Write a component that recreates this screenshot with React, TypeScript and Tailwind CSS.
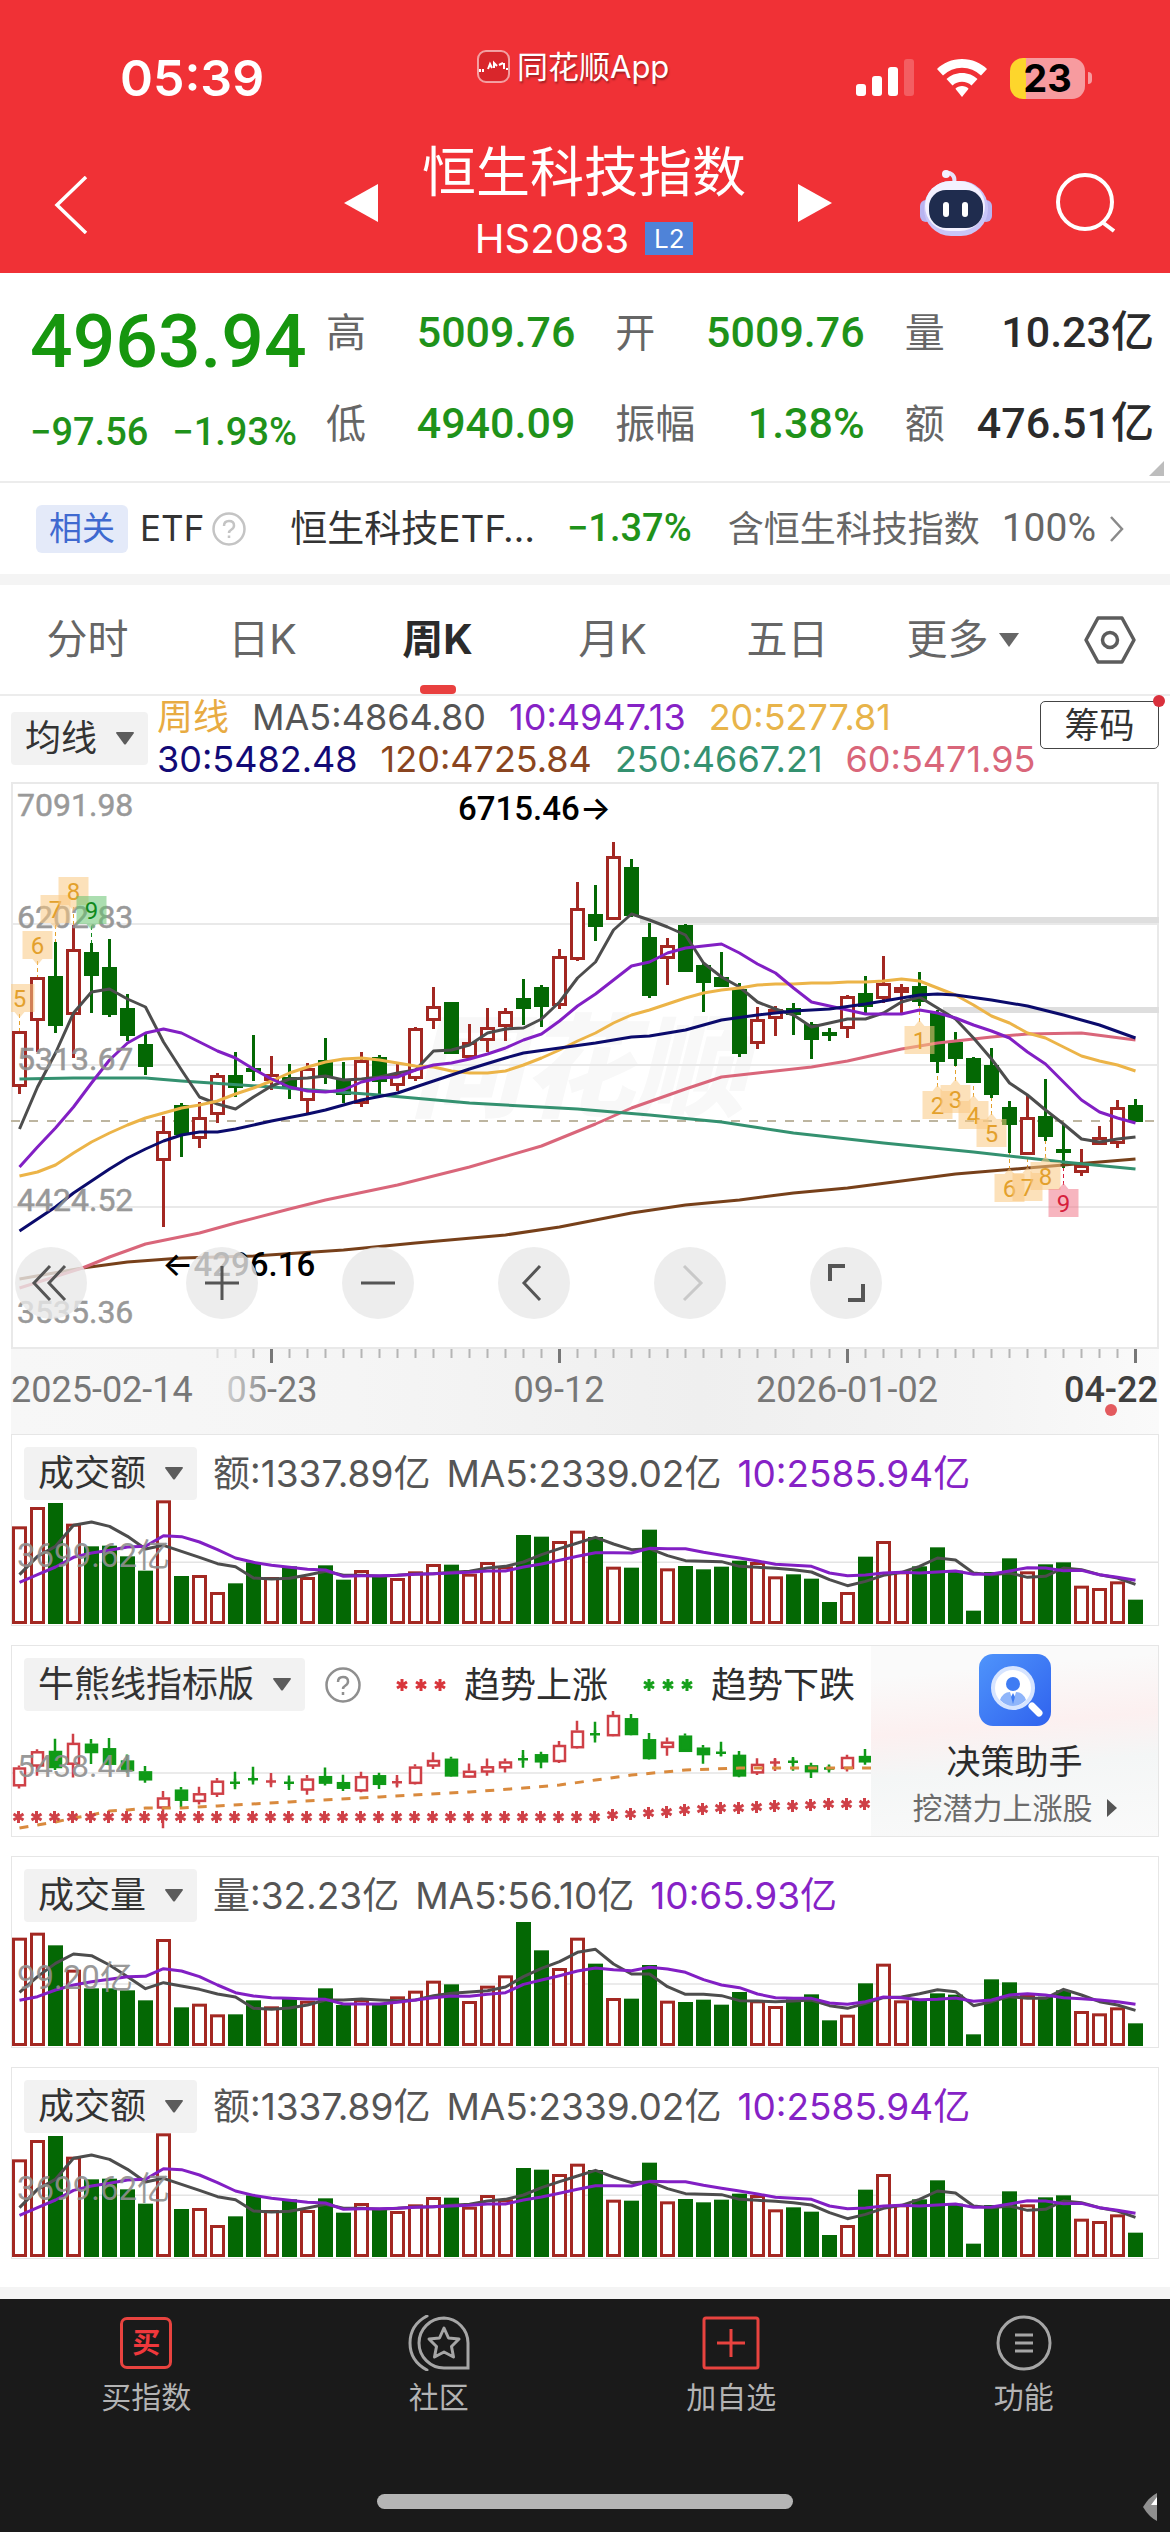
import { useState } from 'react';
import type { ReactNode } from 'react';

const RED = '#a32822';
const GREEN = '#046804';

// [kind, body top, body bottom, high, low]
type Candle = ['r' | 'g', number, number, number, number];

const candles: Candle[] = [
  ['r', 1031, 1087, 1031, 1094], ['r', 977, 1021, 977, 1052], ['g', 976, 1026, 942, 1033],
  ['r', 949, 1015, 925, 1058], ['g', 952, 976, 943, 1013], ['g', 967, 1015, 939, 1017],
  ['g', 1008, 1036, 994, 1041], ['g', 1044, 1067, 1033, 1075], ['r', 1131, 1161, 1116, 1227],
  ['g', 1105, 1135, 1103, 1157], ['r', 1117, 1139, 1102, 1148], ['r', 1075, 1115, 1073, 1123],
  ['g', 1075, 1088, 1052, 1097], ['g', 1068, 1072, 1035, 1081], ['r', 1074, 1081, 1056, 1090],
  ['g', 1077, 1087, 1064, 1099], ['r', 1068, 1101, 1063, 1115], ['g', 1060, 1078, 1038, 1084],
  ['g', 1080, 1095, 1062, 1103], ['r', 1060, 1104, 1052, 1107], ['g', 1057, 1082, 1055, 1096],
  ['r', 1074, 1086, 1063, 1091], ['r', 1028, 1079, 1027, 1081], ['r', 1006, 1021, 987, 1029],
  ['g', 1002, 1054, 1002, 1054], ['r', 1042, 1058, 1024, 1058], ['r', 1027, 1041, 1008, 1052],
  ['r', 1011, 1027, 1008, 1041], ['g', 998, 1009, 979, 1025], ['g', 987, 1007, 985, 1027],
  ['r', 956, 1006, 949, 1009], ['r', 908, 960, 882, 961], ['g', 914, 927, 885, 941],
  ['r', 856, 920, 842, 920], ['g', 867, 916, 859, 917], ['g', 937, 996, 923, 998],
  ['r', 945, 959, 938, 985], ['g', 925, 972, 924, 972], ['g', 965, 983, 963, 1012],
  ['g', 977, 987, 952, 987], ['g', 989, 1054, 983, 1057], ['r', 1019, 1044, 1007, 1049],
  ['r', 1009, 1019, 1006, 1036], ['g', 1008, 1015, 1003, 1035], ['g', 1024, 1040, 1022, 1059],
  ['g', 1032, 1036, 1028, 1041], ['r', 996, 1029, 995, 1038], ['g', 993, 1007, 976, 1015],
  ['r', 983, 999, 956, 1003], ['r', 987, 993, 984, 1013], ['g', 986, 1002, 972, 1006],
  ['g', 1013, 1062, 1010, 1073], ['g', 1042, 1059, 1032, 1066], ['g', 1058, 1083, 1057, 1083],
  ['g', 1065, 1095, 1048, 1098], ['g', 1107, 1125, 1101, 1153], ['r', 1117, 1155, 1095, 1155],
  ['g', 1116, 1137, 1079, 1141], ['g', 1149, 1152, 1124, 1168], ['r', 1165, 1173, 1149, 1176],
  ['r', 1137, 1145, 1126, 1145], ['r', 1107, 1144, 1100, 1148], ['g', 1105, 1122, 1099, 1122],
];

const ma5 = [
  1129, 1087, 1053, 1013, 992, 989, 999, 1007, 1042, 1070, 1097, 1104, 1109, 1097, 1086, 1079,
  1078, 1076, 1080, 1079, 1077, 1073, 1070, 1051, 1050, 1045, 1033, 1029, 1028, 1019, 1002, 978,
  962, 930, 914, 920, 927, 935, 963, 977, 987, 1002, 1009, 1015, 1027, 1023, 1019, 1019,
  1013, 1002, 997, 1008, 1019, 1038, 1059, 1083, 1095, 1110, 1124, 1139, 1142, 1139, 1137,
];
const ma10 = [
  1167, 1147, 1128, 1107, 1083, 1060, 1043, 1033, 1029, 1033, 1042, 1051, 1058, 1069, 1079, 1087,
  1091, 1092, 1090, 1082, 1078, 1077, 1070, 1065, 1063, 1059, 1054, 1048, 1040, 1034, 1021, 1006,
  994, 980, 966, 962, 953, 948, 946, 944, 953, 964, 973, 988, 1002, 1006, 1010, 1014,
  1014, 1014, 1010, 1013, 1018, 1025, 1031, 1038, 1052, 1064, 1082, 1100, 1112, 1118, 1123,
];
const ma20 = [
  1176, 1172, 1165, 1153, 1142, 1133, 1125, 1118, 1113, 1108, 1105, 1101, 1094, 1088, 1081, 1073,
  1067, 1062, 1059, 1058, 1060, 1063, 1066, 1067, 1071, 1073, 1073, 1071, 1065, 1058, 1050, 1041,
  1033, 1023, 1015, 1010, 1004, 998, 993, 990, 988, 985, 984, 984, 983, 983, 982, 982,
  981, 979, 981, 988, 995, 1005, 1016, 1023, 1033, 1038, 1047, 1056, 1061, 1065, 1071,
];

// [week index, y]
type Points = number[][];

const ma30: Points = [
  [0, 1231], [2, 1207], [3, 1193], [4, 1181], [5, 1169], [6, 1158], [7, 1149], [8, 1141], [9, 1135],
  [10, 1132], [11, 1132], [12, 1129], [14, 1121], [16, 1114], [17, 1110], [19, 1100], [21, 1093],
  [23, 1081], [25, 1069], [27, 1058], [28, 1053], [30, 1048], [32, 1043], [34, 1037], [35, 1036],
  [37, 1030], [39, 1020], [41, 1015], [43, 1011], [45, 1009], [47, 1004], [49, 998], [50, 995],
  [51, 994], [52, 995], [54, 1000], [56, 1006], [58, 1015], [60, 1025], [62, 1038],
];
const ma60: Points = [
  [0, 1288], [3.5, 1268], [5, 1257], [7, 1244], [10, 1233], [12, 1223], [15, 1209], [17, 1200],
  [21, 1185], [25, 1167], [29, 1146], [32, 1124], [34, 1108], [37, 1089], [39, 1077], [41, 1073],
  [44, 1067], [46, 1061], [49, 1049], [51, 1043], [54, 1037], [56, 1034], [59, 1033], [62, 1040],
];
const ma120: Points = [
  [0, 1279], [3.5, 1268], [6, 1262], [9, 1258], [13, 1256], [18, 1250], [22, 1243], [27, 1235],
  [30, 1227], [32, 1220], [34, 1213], [37, 1205], [40, 1200], [43, 1193], [46, 1188], [49, 1181],
  [52, 1174], [56, 1168], [58, 1165], [62, 1159],
];
const ma250: Points = [
  [0, 1079], [3, 1078], [7, 1078], [9, 1081], [14, 1087], [20, 1095], [25, 1103], [31, 1109],
  [35, 1115], [39, 1122], [43, 1133], [48, 1143], [53, 1152], [58, 1162], [62, 1169],
];

interface VolumeSeries {
  base: number;
  grid: number;
  bars: number[];
  ma5: number[];
  ma10: number[];
}

const amount: VolumeSeries = {
  base: 583,
  grid: 398,
  bars: [
    290, 232, 220, 282, 350, 348, 380, 423, 212, 439, 436, 487, 461, 398, 442, 410, 442, 407, 450, 421, 437,
    445, 425, 403, 405, 432, 397, 410, 316, 321, 334, 303, 322, 411, 414, 300, 416, 409, 419, 411, 393, 397,
    440, 434, 447, 517, 487, 381, 334, 425, 410, 353, 423, 543, 427, 386, 425, 404, 398, 468, 475, 455, 510,
  ],
  ma5: [
    435, 380, 350, 287, 277, 290, 320, 358, 347, 365, 383, 402, 411, 445, 448, 446, 436, 425, 437, 437, 440,
    437, 433, 432, 428, 425, 415, 410, 397, 375, 357, 340, 323, 343, 360, 357, 378, 393, 395, 396, 410, 413,
    416, 420, 427, 450, 468, 455, 437, 428, 410, 385, 391, 430, 435, 430, 443, 440, 415, 420, 435, 445, 464,
  ],
  ma10: [
    458, 435, 412, 383, 370, 362, 352, 350, 318, 321, 337, 360, 385, 398, 407, 413, 419, 421, 440, 438, 438,
    437, 434, 432, 430, 428, 424, 424, 412, 403, 392, 380, 369, 369, 370, 356, 357, 357, 368, 377, 385, 394,
    404, 407, 410, 430, 438, 436, 430, 428, 430, 427, 424, 434, 433, 424, 414, 415, 423, 422, 435, 443, 452,
  ],
};

const volume: VolumeSeries = {
  base: 623,
  grid: 437,
  bars: [
    298, 283, 321, 394, 450, 450, 456, 486, 302, 507, 496, 528, 528, 486, 504, 480, 487, 450, 500, 483, 498,
    474, 457, 427, 438, 488, 442, 411, 250, 336, 389, 298, 376, 479, 481, 380, 487, 491, 484, 499, 461, 486,
    503, 483, 468, 546, 529, 435, 376, 486, 485, 465, 469, 588, 423, 432, 470, 475, 456, 518, 525, 507, 555,
  ],
  ma5: [
    462, 415, 375, 347, 352, 380, 415, 451, 433, 443, 453, 467, 476, 510, 513, 509, 500, 485, 485, 482, 485,
    487, 485, 472, 465, 461, 457, 446, 415, 390, 370, 342, 333, 377, 407, 407, 445, 468, 468, 472, 487, 488,
    490, 488, 485, 502, 510, 495, 478, 476, 466, 454, 460, 502, 490, 475, 480, 480, 453, 470, 490, 500, 516,
  ],
  ma10: [
    486, 475, 455, 440, 430, 423, 415, 414, 391, 398, 415, 440, 463, 473, 478, 480, 482, 483, 497, 497, 497,
    492, 485, 478, 473, 474, 468, 463, 438, 425, 412, 398, 389, 394, 397, 387, 392, 402, 424, 440, 448, 467,
    478, 480, 480, 494, 498, 490, 476, 478, 484, 483, 479, 489, 485, 470, 466, 470, 478, 481, 485, 490, 498,
  ],
};

const weekX = (i: number) => 19.5 + i * 18;
const dense = (ys: number[]) => ys.map((y, i) => `${weekX(i)},${y}`).join(' ');
const sparse = (ps: Points) => ps.map(([i, y]) => `${weekX(i)},${y}`).join(' ');

const Line = ({ points, color }: { points: string; color: string }) => (
  <polyline points={points} fill="none" stroke={color} strokeWidth="3" strokeLinejoin="round" />
);

// Nine-turn counters drawn above or below a candle
const badges = [
  { i: 0, y: 984, n: 5, up: true, tone: 'amber' },
  { i: 1, y: 931, n: 6, up: true, tone: 'amber' },
  { i: 2, y: 895, n: 7, up: true, tone: 'amber' },
  { i: 3, y: 877, n: 8, up: true, tone: 'amber' },
  { i: 4, y: 896, n: 9, up: true, tone: 'green' },
  { i: 50, y: 1026, n: 1, up: false, tone: 'amber' },
  { i: 51, y: 1091, n: 2, up: false, tone: 'amber' },
  { i: 52, y: 1085, n: 3, up: false, tone: 'amber' },
  { i: 53, y: 1101, n: 4, up: false, tone: 'amber' },
  { i: 54, y: 1119, n: 5, up: false, tone: 'amber' },
  { i: 55, y: 1174, n: 6, up: false, tone: 'amber' },
  { i: 56, y: 1173, n: 7, up: false, tone: 'amber' },
  { i: 57, y: 1162, n: 8, up: false, tone: 'amber' },
  { i: 58, y: 1189, n: 9, up: false, tone: 'red' },
];

const tones: Record<string, { fill: string; text: string }> = {
  amber: { fill: '#f9c881', text: '#e3a02c' },
  green: { fill: '#66c270', text: '#0f8a1c' },
  red: { fill: '#f0788a', text: '#d6203c' },
};

const KLineChart = () => (
  <svg
    viewBox="11 782 1148 652"
    className="block w-full font-['Roboto','Inter','Noto_Sans_CJK_SC',sans-serif]"
    role="img"
    aria-label="周K线"
  >
    <defs>
      <linearGradient id="strip" x1="0" x2="1" y1="0" y2="0">
        <stop offset="0" stopColor="#f7f7f7" />
        <stop offset="0.3" stopColor="#f5f5f5" />
        <stop offset="0.6" stopColor="#efefef" />
        <stop offset="0.85" stopColor="#f4f4f4" />
        <stop offset="1" stopColor="#fafafa" />
      </linearGradient>
      <linearGradient id="fadeDate" x1="0" x2="1" y1="0" y2="0">
        <stop offset="0" stopColor="#cfcfcf" />
        <stop offset="0.35" stopColor="#9a9a9a" />
        <stop offset="0.5" stopColor="#777" />
      </linearGradient>
    </defs>
    <text x="410" y="1108" fontSize="112" fontWeight="900" fontStyle="italic" fill="#f8f8f8">
      同花顺
    </text>
    <g stroke="#e9e9e9" strokeWidth="2">
      <path d="M11 924H1159M11 1065H1159M11 1207H1159" />
      <path d="M12 783H1158V1348H12Z" fill="none" />
    </g>
    <path d="M640 920H1159M943 1010H1159" stroke="#dedede" strokeWidth="6" />
    <path d="M11 1121H1159" stroke="#bdb5a0" strokeWidth="2" strokeDasharray="9 9" />

    <g strokeWidth="1" strokeDasharray="4 3">
      {badges.map((b) => (
        <path
          key={b.n + '-' + b.i}
          d={b.up ? `M${weekX(b.i)} ${b.y + 30}v18` : `M${weekX(b.i)} ${b.y - 4}v-18`}
          stroke={tones[b.tone].text}
        />
      ))}
    </g>
    {candles.map(([kind, top, bottom, high, low], i) => (
      <g key={i} stroke={kind === 'r' ? RED : GREEN} strokeWidth="3" fill={kind === 'r' ? '#fff' : GREEN}>
        <path d={`M${weekX(i)} ${high}V${top}M${weekX(i)} ${bottom}V${low}`} />
        <rect x={weekX(i) - 6} y={top + 1.5} width="12" height={Math.max(bottom - top - 3, 1)} />
      </g>
    ))}

    <Line points={sparse(ma120)} color="#77401a" />
    <Line points={sparse(ma60)} color="#d9667a" />
    <Line points={sparse(ma250)} color="#349170" />
    <Line points={dense(ma5)} color="#4d4d4d" />
    <Line points={dense(ma20)} color="#ecb448" />
    <Line points={dense(ma10)} color="#821fc4" />
    <Line points={sparse(ma30)} color="#0b0b6c" />

    <g fontSize="32" fill="#8f8f8f" opacity="0.9" strokeWidth="0.5" stroke="#8f8f8f">
      <text x="17" y="816">7091.98</text>
      <text x="17" y="928">6202.83</text>
      <text x="17" y="1070">5313.67</text>
      <text x="17" y="1211">4424.52</text>
      <text x="17" y="1323">3535.36</text>
    </g>
    <g fontSize="33" fontWeight="500" fill="#000">
      <text x="458" y="820">6715.46→</text>
      <text x="162" y="1276">←4296.16</text>
    </g>

    {badges.map((b) => (
      <g key={b.n + '-' + b.i}>
        <path
          d={
            b.up
              ? `M${Math.max(weekX(b.i) - 15, 11)} ${b.y}H${weekX(b.i) + 15}V${b.y + 28}H${weekX(b.i) + 5}l-5 6l-5 -6H${Math.max(weekX(b.i) - 15, 11)}Z`
              : `M${weekX(b.i) - 15} ${b.y}h10l5 -6l5 6h10v28h-30Z`
          }
          fill={tones[b.tone].fill}
          opacity="0.55"
        />
        <text x={weekX(b.i)} y={b.y + 23} fontSize="24" textAnchor="middle" fill={tones[b.tone].text}>
          {b.n}
        </text>
      </g>
    ))}

    {/* Time axis */}
    <rect x="11" y="1349" width="1148" height="85" fill="url(#strip)" />
    {Array.from({ length: 52 }, (_, k) => k + 11).map((i) => {
      const major = (i - 14) % 16 === 0;
      return (
        <path
          key={i}
          d={`M${weekX(i)} 1349v${major ? 14 : 9}`}
          stroke={major ? '#777' : '#b5b5b5'}
          strokeWidth={major ? 3 : 2}
          opacity={i < 13 ? 0.4 : 1}
        />
      );
    })}
    <g fontSize="36" fill="#777">
      <text x="11" y="1402">2025-02-14</text>
      <text x="272" y="1402" textAnchor="middle" fill="url(#fadeDate)">05-23</text>
      <text x="559" y="1402" textAnchor="middle">09-12</text>
      <text x="847" y="1402" textAnchor="middle">2026-01-02</text>
      <text x="1158" y="1402" textAnchor="end" fill="#3f3f3f" fontWeight="500">04-22</text>
    </g>
    <circle cx="1111" cy="1410" r="6" fill="#e35a5e" />
  </svg>
);

const VolumeChart = ({ series, label }: { series: VolumeSeries; label: string }) => {
  const toY = (v: number) => 124 - (series.base - v) / 3;
  return (
    <svg
      viewBox="12 0 1146 125"
      className="block w-full font-['Roboto','Noto_Sans_CJK_SC',sans-serif]"
      role="img"
      aria-label={label}
    >
      <path d={`M12 ${toY(series.grid)}H1158`} stroke="#e4e4e4" strokeWidth="1.5" />
      {series.bars.map((v, i) => {
        const red = candles[i][0] === 'r';
        return (
          <rect
            key={i}
            x={weekX(i) - 6}
            y={toY(v) + 1.5}
            width="12"
            height={(series.base - v) / 3 - 3}
            fill={red ? '#fff' : GREEN}
            stroke={red ? RED : GREEN}
            strokeWidth="3"
          />
        );
      })}
      <Line points={dense(series.ma5.map(toY))} color="#4d4d4d" />
      <Line points={dense(series.ma10.map(toY))} color="#821fc4" />
      <text x="17" y={toY(series.grid) + 5} fontSize="33" fill="#8f8f8f" opacity="0.9">
        {label}
      </text>
    </svg>
  );
};

const Star = ({ x, y, color = '#cf4047' }: { x: number; y: number; color?: string }) => (
  <path
    d={`M${x} ${y - 6}v12M${x - 5} ${y - 3}l10 6M${x - 5} ${y + 3}l10 -6`}
    stroke={color}
    strokeWidth="3"
    fill="none"
  />
);

const starY = [106, 104, 103, 102, 101, 99, 98, 97, 97, 96, 95, 95, 94, 93, 93, 93];
const trendLine: Points = [
  [0, 117], [1, 114], [2, 111], [3, 107], [4, 104], [5, 100], [6, 99], [7, 97], [9, 97], [11, 95],
  [15, 91], [20, 86], [25, 81], [28, 77], [30, 74], [32, 69], [34, 64], [37, 59], [40, 57], [48, 57],
];

const TrendChart = () => {
  const toY = (v: number) => 4 + (v - 856) * 0.3;
  return (
    <svg
      viewBox="12 0 859 125"
      className="block w-full font-['Roboto',sans-serif]"
      role="img"
      aria-label="牛熊线指标版"
    >
      <path d="M12 62H871" stroke="#e4e4e4" strokeWidth="1.5" />
      {candles.slice(0, 48).map(([kind, top, bottom, high, low], i) => {
        const color = kind === 'r' ? '#cf4047' : '#0f9a17';
        const x = weekX(i) - 0.5;
        // A short body is drawn as a plain cross
        const flat = bottom - top < 14;
        return (
          <g key={i} stroke={color} strokeWidth="2.5" fill={kind === 'r' ? '#fff' : color}>
            <path d={`M${x} ${toY(high) - 2}V${toY(top)}M${x} ${toY(bottom)}V${toY(low) + 2}`} />
            {flat ? (
              <path d={`M${x - 5} ${toY((top + bottom) / 2)}h10M${x} ${toY(top) - 2}V${toY(bottom) + 2}`} />
            ) : (
              <rect x={x - 5} y={toY(top) + 1} width="11" height={Math.max(toY(bottom) - toY(top), 1)} />
            )}
          </g>
        );
      })}
      <polyline
        points={sparse(trendLine)}
        fill="none"
        stroke="#d98a3e"
        strokeWidth="3"
        strokeDasharray="9 9"
      />
      {Array.from({ length: 48 }, (_, i) => (
        <Star key={i} x={weekX(i) - 1} y={i < 33 ? 106 : starY[i - 32]} />
      ))}
      <text x="17" y="66" fontSize="32" fill="#8f8f8f" opacity="0.9">
        5438.44
      </text>
    </svg>
  );
};

const Legend = ({ color, children }: { color: string; children: ReactNode }) => (
  <span className="flex items-center gap-[18px] whitespace-nowrap text-[36px] text-[#2e2e2e]">
    <svg width="50" height="16" viewBox="0 0 50 16">
      <Star x={6} y={8} color={color} />
      <Star x={25} y={8} color={color} />
      <Star x={44} y={8} color={color} />
    </svg>
    {children}
  </span>
);

const Picker = ({ label }: { label: string }) => (
  <span className="relative inline-flex shrink-0">
    <select
      aria-label={label}
      className="h-[53px] appearance-none rounded bg-[#f2f2f2] pr-[50px] pl-[14px] text-[36px] leading-[53px] text-[#333] outline-none"
    >
      <option>{label}</option>
    </select>
    <svg
      className="pointer-events-none absolute top-5 right-[14px]"
      width="18"
      height="13"
      viewBox="0 0 18 13"
    >
      <path d="M1 0H17Q18 0 18 1L10 12Q9 13 8 12L0 1Q0 0 1 0Z" fill="#5c5c5c" />
    </svg>
  </span>
);

interface VolumePanelProps {
  name: string;
  current: string;
  avg5: string;
  avg10: string;
  axis: string;
  series: VolumeSeries;
}

const VolumePanel = ({ name, current, avg5, avg10, axis, series }: VolumePanelProps) => (
  <section className="mx-[11px] mb-[19px] border border-[#e6e6e6]">
    <div className="flex h-[65px] items-end gap-4 pl-3 text-[37px] leading-[53px] whitespace-nowrap text-[#555]">
      <Picker label={name} />
      <span>{current}</span>
      <span>{avg5}</span>
      <span className="text-[#8622c6]">{avg10}</span>
    </div>
    <VolumeChart series={series} label={axis} />
  </section>
);

const CircleButton = ({ label, children }: { label: string; children: ReactNode }) => (
  <button
    type="button"
    aria-label={label}
    className="flex h-[72px] w-[72px] items-center justify-center rounded-full bg-[#e8e8e8]/80"
  >
    <svg width="40" height="40" viewBox="0 0 40 40" fill="none" stroke="#555" strokeWidth="3">
      {children}
    </svg>
  </button>
);

const StatusBar = () => (
  <div className="grid h-[136px] grid-cols-[1fr_190px_1fr] items-center pt-5 pr-[78px] pl-[120px]">
    <span className="text-[50px] leading-none font-semibold">05:39</span>
    <span className="-ml-[34px] flex items-center gap-[7px] pb-6 text-[31px] leading-none whitespace-nowrap [text-shadow:1px_2px_2px_rgba(0,0,0,0.35)]">
      <svg className="shrink-0" width="33" height="33" viewBox="0 0 33 33" fill="none">
        <rect x="1" y="1" width="31" height="31" rx="8" fill="#d9262b" stroke="#fff" strokeOpacity="0.55" strokeWidth="2" />
        <path d="M3 22v-3M6 22v-3M11 19l2-5 2 4M17 18v-5l3 3M22 15l4-2M27 13v6M30 20v-2" stroke="#fff" strokeWidth="2" />
      </svg>
      同花顺App
    </span>
    <span className="flex items-center justify-end gap-[23px]">
      <svg width="58" height="38" viewBox="0 0 58 38" fill="#fff">
        <rect x="0" y="25" width="10" height="12" rx="3" />
        <rect x="16" y="17" width="10" height="20" rx="3" />
        <rect x="32" y="8" width="10" height="29" rx="3" />
        <rect x="48" y="0" width="10" height="37" rx="3" opacity="0.22" />
      </svg>
      <svg width="50" height="38" viewBox="0 0 50 38" fill="#fff">
        <path d="M25 0C15 0 6 4 0 10l6 6.500a27 27 0 0 1 38 0L50 10C44 4 35 0 25 0Z" />
        <path d="M25 14c-6 0-11.500 2.300-15.500 6l6 6.500a14 14 0 0 1 19 0l6-6.500C36.500 16.300 31 14 25 14Z" />
        <path d="M25 27c-2.600 0-5 1-6.600 2.700L25 38l6.600-8.300C30 28 27.600 27 25 27Z" />
      </svg>
      <span className="flex items-center gap-[3px]">
        <span className="flex h-[41px] w-[75px] items-center justify-center rounded-[13px] bg-[linear-gradient(90deg,#fdd62c_22%,#f79b9f_22%)] text-[38px] leading-none font-bold text-black">
          23
        </span>
        <span className="h-3 w-1 rounded-r bg-[#f79b9f]" />
      </span>
    </span>
  </div>
);

const Robot = () => (
  <svg width="72" height="66" viewBox="0 0 72 66">
    <path d="M34 13C36 5 30 2 25 3" fill="none" stroke="#e6e2fb" strokeWidth="4" strokeLinecap="round" />
    <circle cx="26" cy="4" r="4" fill="#f4f1ff" />
    <rect x="0" y="30" width="12" height="22" rx="6" fill="#b9b4f0" />
    <rect x="60" y="30" width="12" height="22" rx="6" fill="#b9b4f0" />
    <rect x="4" y="11" width="64" height="55" rx="27" fill="#c9c5f8" />
    <rect x="5" y="11" width="60" height="50" rx="25" fill="#f3f1ff" />
    <rect x="9" y="20" width="54" height="38" rx="17" fill="#1f2c4e" />
    <rect x="23" y="32" width="6" height="15" rx="3" fill="#fff" />
    <rect x="42" y="32" width="6" height="15" rx="3" fill="#fff" />
  </svg>
);

const Header = () => (
  <header className="bg-[#f03136] text-white">
    <StatusBar />
    <div className="grid h-[137px] grid-cols-[1fr_488px_1fr] items-center pb-1 pl-[6px]">
      <button type="button" aria-label="返回" className="ml-12 w-10 pt-1">
        <svg width="34" height="58" viewBox="0 0 34 58" fill="none" stroke="#fff" strokeWidth="3.500">
          <path d="M32 1L3 29L32 57" />
        </svg>
      </button>
      <div className="flex items-center justify-between">
        <button type="button" aria-label="上一个">
          <svg width="34" height="38" viewBox="0 0 34 38" fill="#fff">
            <path d="M34 0V38L0 19Z" />
          </svg>
        </button>
        <div className="flex flex-col items-center pr-2">
          <h1 className="text-[54px] leading-[72px] whitespace-nowrap">恒生科技指数</h1>
          <div className="flex items-center gap-4 text-[40px] leading-[60px]">
            HS2083
            <span className="flex h-[33px] w-12 items-center justify-center bg-[#4f83d8] text-[26px] leading-none">
              L2
            </span>
          </div>
        </div>
        <button type="button" aria-label="下一个">
          <svg width="34" height="38" viewBox="0 0 34 38" fill="#fff">
            <path d="M0 0V38L34 19Z" />
          </svg>
        </button>
      </div>
      <div className="flex items-center justify-end gap-16 pr-[54px]">
        <button type="button" aria-label="智能助手">
          <Robot />
        </button>
        <button type="button" aria-label="搜索">
          <svg width="60" height="60" viewBox="0 0 60 60" fill="none" stroke="#fff" strokeWidth="4">
            <circle cx="29" cy="29" r="27" />
            <path d="M46 49L58 58" />
          </svg>
        </button>
      </div>
    </div>
  </header>
);

const quotes = [
  { label: '高', value: '5009.76', className: 'text-[#1f921a]' },
  { label: '开', value: '5009.76', className: 'text-[#1f921a]' },
  { label: '量', value: '10.23亿', className: 'text-[#2b2b2b]' },
  { label: '低', value: '4940.09', className: 'text-[#1f921a]' },
  { label: '振幅', value: '1.38%', className: 'text-[#1f921a]' },
  { label: '额', value: '476.51亿', className: 'text-[#2b2b2b]' },
];

const QuoteSummary = () => (
  <section className="relative flex border-b-2 border-[#ececec] pt-[14px] pb-3">
    <div className="w-[326px] shrink-0 pl-[30px] font-['Roboto',sans-serif] font-medium text-[#16960e]">
      <div className="text-[75px] leading-[108px]">4963.94</div>
      <div className="flex gap-6 text-[38px] leading-[74px] text-[#1f921a]">
        <span>−97.56</span>
        <span>−1.93%</span>
      </div>
    </div>
    <dl className="grid flex-1 grid-cols-3 gap-x-10 pr-4">
      {quotes.map((q) => (
        <div key={q.label} className="flex h-[91px] items-center justify-between whitespace-nowrap">
          <dt className="text-[40px] text-[#666]">{q.label}</dt>
          <dd
            className={`font-['Roboto','Noto_Sans_CJK_SC',sans-serif] text-[43px] font-medium ${q.className}`}
          >
            {q.value}
          </dd>
        </div>
      ))}
    </dl>
    <svg className="absolute right-[6px] bottom-[5px]" width="15" height="15" viewBox="0 0 15 15">
      <path d="M15 0V15H0Z" fill="#bdbdbd" />
    </svg>
  </section>
);

const RelatedEtf = () => (
  <a
    href="#etf"
    className="flex h-[91px] items-center pl-9 text-[36px] whitespace-nowrap text-[#333]"
  >
    <span className="flex h-12 w-[92px] items-center justify-center rounded-md bg-[#e4eaf9] text-[33px] text-[#3f69d0]">
      相关
    </span>
    <span className="ml-3 text-[35px]">ETF</span>
    <svg className="ml-2" width="34" height="34" viewBox="0 0 34 34" fill="none" stroke="#c4c4c4" strokeWidth="2.500">
      <circle cx="17" cy="17" r="15.500" />
      <path d="M12 14Q12 9 17 9T22 13.500Q22 16 19.500 17.500T17 21M17 23.500V26" />
    </svg>
    <span className="ml-[44px] text-[37px]">恒生科技ETF…</span>
    <span className="ml-auto font-['Roboto',sans-serif] text-[38px] font-medium text-[#1f921a]">−1.37%</span>
    <span className="ml-9 text-[#666]">含恒生科技指数</span>
    <span className="ml-[22px] font-['Roboto',sans-serif] text-[39px] text-[#666]">100%</span>
    <svg className="mr-[46px] ml-[14px]" width="14" height="26" viewBox="0 0 14 26" fill="none" stroke="#8a8a8a" strokeWidth="2.500">
      <path d="M1 1L12 13L1 25" />
    </svg>
  </a>
);

const tabs = ['分时', '日K', '周K', '月K', '五日', '更多'];

const PeriodTabs = () => {
  const [active, setActive] = useState('周K');
  return (
    <nav className="grid h-[111px] grid-cols-[repeat(6,175fr)_120fr] items-stretch border-b-2 border-[#ececec]">
      {tabs.map((tab) => (
        <button
          key={tab}
          type="button"
          onClick={() => setActive(tab)}
          className={`relative flex items-center justify-center gap-[10px] text-[41px] whitespace-nowrap ${
            active === tab ? 'font-bold text-[#2b2b2b]' : 'text-[#666]'
          }`}
        >
          {tab}
          {tab === '更多' && (
            <svg width="20" height="14" viewBox="0 0 20 14">
              <path d="M0 0H20L10 14Z" fill="#666" />
            </svg>
          )}
          {active === tab && (
            <span className="absolute bottom-0 h-[9px] w-9 rounded-[4px] bg-[#e9403f]" />
          )}
        </button>
      ))}
      <button type="button" aria-label="设置" className="flex items-center justify-center">
        <svg width="52" height="48" viewBox="0 0 52 48" fill="none" stroke="#5c5c5c" strokeWidth="3.500">
          <path d="M14 2H38L50 24L38 46H14L2 24Z" strokeLinejoin="round" />
          <circle cx="26" cy="24" r="7.500" />
        </svg>
      </button>
    </nav>
  );
};

const AverageLegend = () => (
  <div className="flex h-[86px] items-start px-[11px] whitespace-nowrap">
    <div className="pt-4">
      <Picker label="均线" />
    </div>
    <div className="ml-[9px] text-[36px] leading-[42px]">
      <div className="flex gap-[23px]">
        <span className="text-[#e8ab42]">周线</span>
        <span className="text-[#555]">MA5:4864.80</span>
        <span className="text-[#8622c6]">10:4947.13</span>
        <span className="text-[#e8b44a]">20:5277.81</span>
      </div>
      <div className="flex gap-[23px]">
        <span className="text-[#120a76]">30:5482.48</span>
        <span className="text-[#8a4520]">120:4725.84</span>
        <span className="text-[#349170]">250:4667.21</span>
        <span className="text-[#d9667a]">60:5471.95</span>
      </div>
    </div>
    <button
      type="button"
      className="relative mt-[5px] ml-auto flex h-12 w-[119px] shrink-0 items-center justify-center rounded-[5px] border border-[#444] bg-white text-[35px] text-[#333]"
    >
      筹码
      <span className="absolute -top-[7px] -right-[7px] h-3 w-3 rounded-full bg-[#d9303c]" />
    </button>
  </div>
);

const ChartControls = () => (
  <div className="absolute bottom-[115px] left-1 flex gap-[84px]">
    <span className="mr-[15px]">
      <CircleButton label="最早">
        <path d="M19 3L3 20L19 37M34 3L18 20L34 37" />
      </CircleButton>
    </span>
    <CircleButton label="放大">
      <path d="M3 20H37M20 3V37" />
    </CircleButton>
    <CircleButton label="缩小">
      <path d="M3 20H37" />
    </CircleButton>
    <CircleButton label="左移">
      <path d="M26 3L10 20L26 37" />
    </CircleButton>
    <CircleButton label="右移">
      <path d="M14 3L31 20L14 37" stroke="#c9c9c9" />
    </CircleButton>
    <CircleButton label="全屏">
      <path d="M4 18V3H19M37 21V37H22" strokeWidth="4" />
    </CircleButton>
  </div>
);

const DecisionHelper = () => (
  <a
    href="#helper"
    className="flex w-[287px] shrink-0 flex-col items-center bg-[linear-gradient(175deg,#fafafa_15%,#fcf0f0_42%,#f4f6f6_62%,#fafafa_100%)] pt-2 whitespace-nowrap"
  >
    <svg width="72" height="72" viewBox="0 0 72 72" fill="none">
      <defs>
        <linearGradient id="helper" x1="0" x2="1" y1="0" y2="1">
          <stop offset="0" stopColor="#4f94fb" />
          <stop offset="1" stopColor="#2f62ee" />
        </linearGradient>
      </defs>
      <rect width="72" height="72" rx="14" fill="url(#helper)" />
      <circle cx="34" cy="34" r="20" fill="#fff" stroke="#d6e4ff" strokeWidth="4" />
      <circle cx="34" cy="30" r="7" fill="#3f7cf3" />
      <path d="M21 46Q24 38 31 38L34 48L37 38Q44 38 47 46Q41 52 34 52T21 46Z" fill="#8fb5fa" />
      <path d="M34 39L36 43L34 50L32 43Z" fill="#3f7cf3" />
      <path d="M53 52L60 59" stroke="#fff" strokeWidth="7" strokeLinecap="round" />
    </svg>
    <span className="mt-3 text-[34px] leading-[48px] text-[#2b2b2b]">决策助手</span>
    <span className="flex items-center gap-[14px] text-[30px] leading-[44px] text-[#6b6b6b]">
      挖潜力上涨股
      <svg width="10" height="18" viewBox="0 0 10 18">
        <path d="M0 0L10 9L0 18Z" fill="#555" />
      </svg>
    </span>
  </a>
);

const TrendPanel = () => (
  <section className="mx-[11px] mb-[19px] flex border border-[#e6e6e6]">
    <div className="min-w-0 flex-1">
      <div className="flex h-[65px] items-end pl-3">
        <Picker label="牛熊线指标版" />
        <div className="flex h-[53px] flex-1 items-center justify-between pr-4 pl-5">
          <svg width="36" height="36" viewBox="0 0 36 36" fill="none" stroke="#8f8f8f" strokeWidth="2.500">
            <circle cx="18" cy="18" r="16.500" />
            <path d="M13 15Q13 10 18 10T23 14.500Q23 17 20.500 18.500T18 22M18 25V28" />
          </svg>
          <Legend color="#d8353b">趋势上涨</Legend>
          <Legend color="#16a01c">趋势下跌</Legend>
        </div>
      </div>
      <TrendChart />
    </div>
    <DecisionHelper />
  </section>
);

const BottomNav = () => (
  <footer className="relative h-[234px] overflow-hidden bg-[#1a1a1a] text-[#b3b3b3]">
    <nav className="grid grid-cols-4 pt-4 text-[30px] leading-[44px]">
      <a href="#buy" className="flex flex-col items-center gap-1">
        <span className="flex h-[56px] items-center">
          <span className="flex h-[52px] w-[52px] items-center justify-center rounded-[7px] border-3 border-[#e8433f] text-[28px] leading-none font-bold text-[#f0383c]">
            买
          </span>
        </span>
        买指数
      </a>
      <a href="#community" className="flex flex-col items-center gap-1">
        <svg width="62" height="56" viewBox="0 0 62 56" fill="none" stroke="#a6a6a6" strokeWidth="3">
          <path d="M36 3A25 25 0 0 0 36 53H60V28A25 25 0 0 0 36 3Z" />
          <path d="M19 1Q2 10 2 28T19 55" strokeLinecap="round" />
          <path d="M36 13L40.500 23L51 24L43.500 31.500L45.500 42L36 37L26.500 42L28.500 31.500L21 24L31.500 23Z" strokeLinejoin="round" />
        </svg>
        社区
      </a>
      <a href="#favorite" className="flex flex-col items-center gap-1">
        <svg width="58" height="56" viewBox="0 0 58 56" fill="none" stroke="#e8433f" strokeWidth="3">
          <rect x="2" y="3" width="54" height="50" rx="2" />
          <path d="M15 28H43M29 14V42" />
        </svg>
        加自选
      </a>
      <a href="#tools" className="flex flex-col items-center gap-1">
        <svg width="56" height="56" viewBox="0 0 56 56" fill="none" stroke="#a6a6a6" strokeWidth="3">
          <circle cx="28" cy="28" r="26" />
          <path d="M19 20H37M19 28H37M19 36H37" />
        </svg>
        功能
      </a>
    </nav>
    <div className="mx-auto mt-[75px] h-[15px] w-[416px] rounded-full bg-[#b5b5b5]" />
    <svg className="absolute right-[13px] bottom-3" width="14" height="28" viewBox="0 0 14 28">
      <path d="M14 0V28Q6 24 0 14Q6 4 14 0Z" fill="#8f8f8f" />
      <path d="M14 4V12H8Z" fill="#fff" />
    </svg>
  </footer>
);

export default function App() {
  return (
    <div className="w-full bg-white font-['Inter','Noto_Sans_CJK_SC',sans-serif]">
      <Header />
      <main>
        <QuoteSummary />
        <RelatedEtf />
        <div className="h-[11px] bg-[#f4f4f4]" />
        <PeriodTabs />
        <AverageLegend />
        <section className="relative mx-[11px]">
          <KLineChart />
          <ChartControls />
        </section>
        <VolumePanel
          name="成交额"
          current="额:1337.89亿"
          avg5="MA5:2339.02亿"
          avg10="10:2585.94亿"
          axis="3699.62亿"
          series={amount}
        />
        <TrendPanel />
        <VolumePanel
          name="成交量"
          current="量:32.23亿"
          avg5="MA5:56.10亿"
          avg10="10:65.93亿"
          axis="99.20亿"
          series={volume}
        />
        <VolumePanel
          name="成交额"
          current="额:1337.89亿"
          avg5="MA5:2339.02亿"
          avg10="10:2585.94亿"
          axis="3699.62亿"
          series={amount}
        />
        <div className="mt-7 h-3 bg-[#f4f4f4]" />
      </main>
      <BottomNav />
    </div>
  );
}
